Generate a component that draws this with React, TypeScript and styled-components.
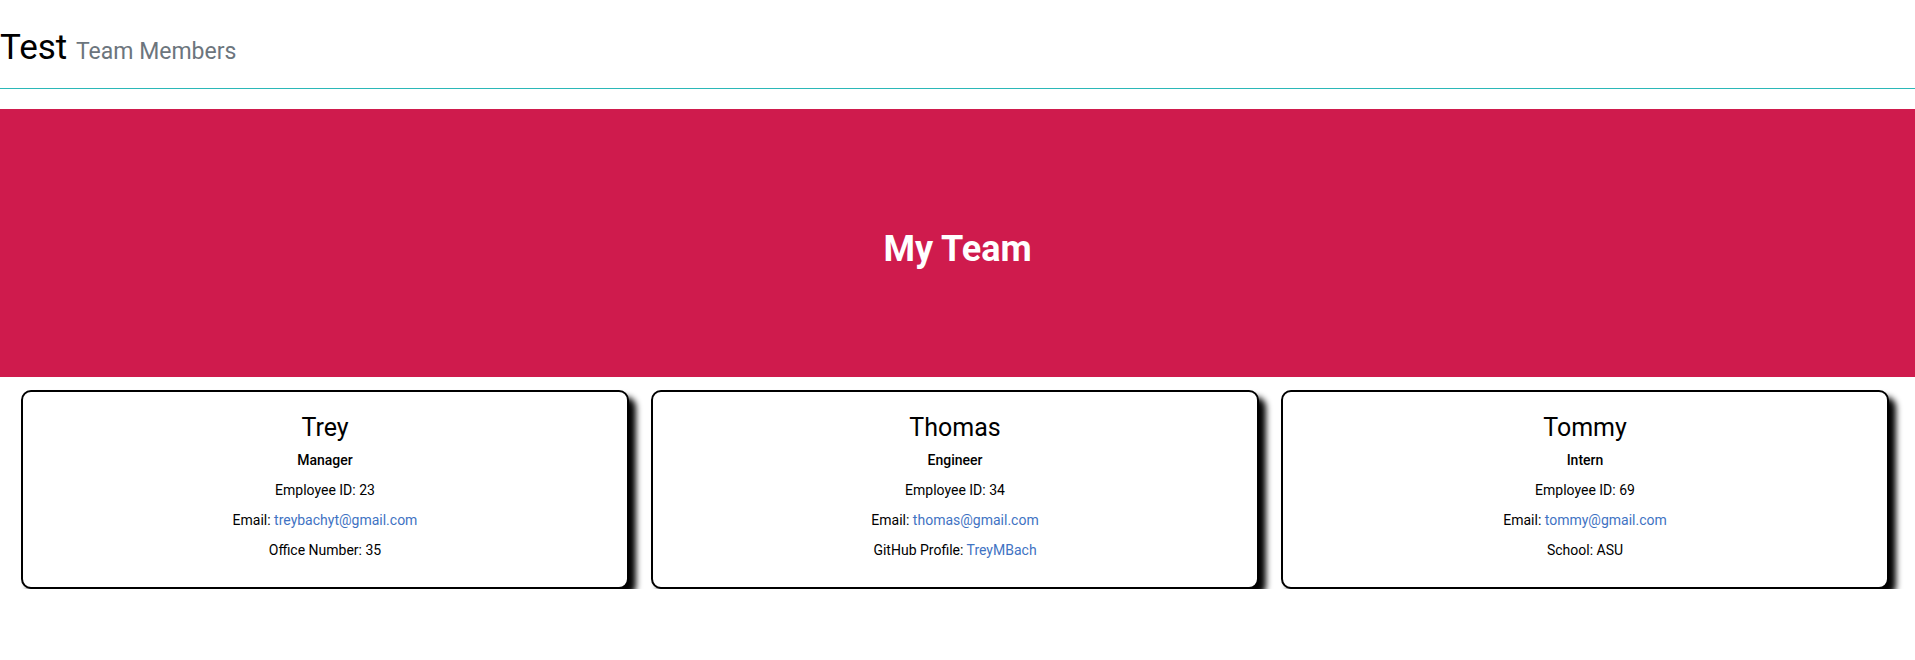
import styled, { createGlobalStyle } from 'styled-components';

const GlobalStyle = createGlobalStyle`
  body {
    margin: 0;
    font-family: Roboto, "Liberation Sans", sans-serif;
    color: #000;
    background: #fff;
  }
`;

type Member = {
  name: string;
  role: string;
  id: number;
  email: string;
  extraLabel: string;
  extraValue: string;
  extraLink?: boolean;
};

const team: Member[] = [
  { name: 'Trey', role: 'Manager', id: 23, email: 'treybachyt@gmail.com', extraLabel: 'Office Number', extraValue: '35' },
  { name: 'Thomas', role: 'Engineer', id: 34, email: 'thomas@gmail.com', extraLabel: 'GitHub Profile', extraValue: 'TreyMBach', extraLink: true },
  { name: 'Tommy', role: 'Intern', id: 69, email: 'tommy@gmail.com', extraLabel: 'School', extraValue: 'ASU' },
];

function App() {
  return (
    <>
      <GlobalStyle />
      <Header>
        <Title>
          Test <Subtitle>Team Members</Subtitle>
        </Title>
      </Header>

      <Banner>
        <BannerTitle>My Team</BannerTitle>
      </Banner>

      <CardRow>
        {team.map((m) => (
          <Card key={m.id}>
            <Name>{m.name}</Name>
            <Role>{m.role}</Role>
            <Line>Employee ID: {m.id}</Line>
            <Line>
              Email: <Link href={`mailto:${m.email}`}>{m.email}</Link>
            </Line>
            <Line>
              {m.extraLabel}:{' '}
              {m.extraLink ? <Link href="#">{m.extraValue}</Link> : m.extraValue}
            </Line>
          </Card>
        ))}
      </CardRow>
    </>
  );
}

export default App;

const Header = styled.header`
  padding: 27px 0 15px;
  border-bottom: 1px solid #2bb8b8;
`;

const Title = styled.h1`
  margin: 0;
  font-size: 35px;
  font-weight: 400;
  line-height: 42px;
`;

const Subtitle = styled.small`
  font-size: 23px;
  color: #6c757d;
`;

const Banner = styled.section`
  margin-top: 20px;
  height: 268px;
  box-sizing: border-box;
  padding-top: 14px;
  background: #cf1b4d;
  display: flex;
  align-items: center;
  justify-content: center;
`;

const BannerTitle = styled.h2`
  margin: 0;
  color: #fff;
  font-size: 36px;
  font-weight: 700;
  line-height: 1.2;
`;

const CardRow = styled.div`
  display: flex;
  gap: 22px;
  padding: 13px 26px 0 21px;
`;

const Card = styled.div`
  flex: 1;
  box-sizing: border-box;
  height: 199px;
  padding-top: 19px;
  border: 2px solid #000;
  border-radius: 10px;
  box-shadow: 7px 7px 6px #000;
  text-align: center;
  background: #fff;
`;

const Name = styled.h3`
  margin: 0;
  font-size: 25px;
  font-weight: 400;
  line-height: 34px;
`;

const Role = styled.div`
  font-size: 14px;
  font-weight: 500;
  line-height: 30px;
`;

const Line = styled.div`
  font-size: 14px;
  line-height: 30px;
`;

const Link = styled.a`
  color: #3f73c3;
  text-decoration: none;
`;
